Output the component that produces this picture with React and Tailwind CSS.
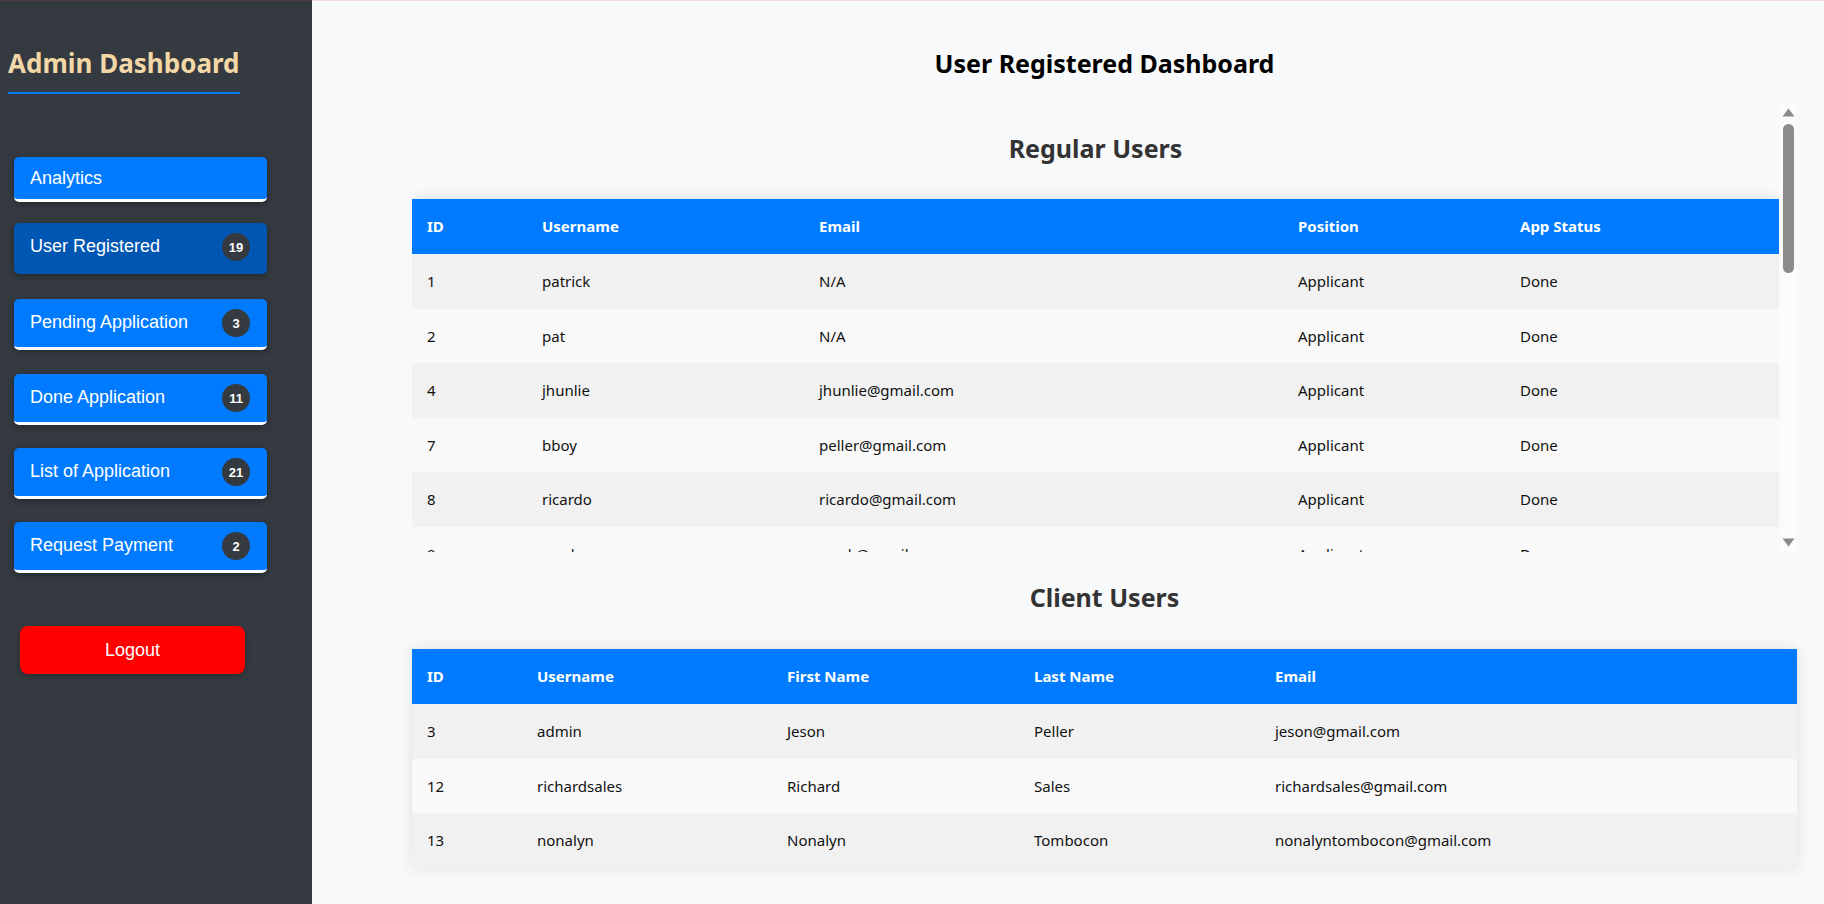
import React from 'react';

const navItems = [
  { label: 'Analytics', gap: 'mt-[63px]' },
  { label: 'User Registered', count: 19, active: true, gap: 'mt-[21px]' },
  { label: 'Pending Application', count: 3, gap: 'mt-[25px]' },
  { label: 'Done Application', count: 11, gap: 'mt-[24px]' },
  { label: 'List of Application', count: 21, gap: 'mt-[23px]' },
  { label: 'Request Payment', count: 2, gap: 'mt-[23px]' },
];

// only the rows that show inside the scroll box
const regularUsers = [
  { id: 1, username: 'patrick', email: 'N/A' },
  { id: 2, username: 'pat', email: 'N/A' },
  { id: 4, username: 'jhunlie', email: 'jhunlie@gmail.com' },
  { id: 7, username: 'bboy', email: 'peller@gmail.com' },
  { id: 8, username: 'ricardo', email: 'ricardo@gmail.com' },
  { id: 9, username: 'mark', email: 'mark@gmail.com' },
];

const clientUsers = [
  { id: 3, username: 'admin', first: 'Jeson', last: 'Peller', email: 'jeson@gmail.com' },
  { id: 12, username: 'richardsales', first: 'Richard', last: 'Sales', email: 'richardsales@gmail.com' },
  { id: 13, username: 'nonalyn', first: 'Nonalyn', last: 'Tombocon', email: 'nonalyntombocon@gmail.com' },
];

function Sidebar() {
  return (
    <aside className="w-[312px] shrink-0 bg-[#343a40] flex flex-col items-start font-['Liberation_Sans',Arial,sans-serif]">
      <h2 className="ml-[8px] mt-[47px] pb-[13px] border-b-2 border-[#007bff] text-[26px] leading-[32px] font-bold text-[#f3d7a6] font-['Noto_Sans',sans-serif]">
        Admin Dashboard
      </h2>
      {navItems.map((item) => (
        <button
          key={item.label}
          className={`${item.gap} ml-[14px] w-[253px] flex items-baseline justify-between pl-[16px] pr-[17px] py-[10px] rounded-[5px] border-b-[3px] text-left text-white text-[18px] shadow-[0_2px_7px_rgba(0,0,0,0.3)] ${
            item.active ? 'bg-[#0056b3] border-[#0056b3]' : 'bg-[#007bff] border-white'
          }`}
        >
          <span className="leading-[22px]">{item.label}</span>
          {item.count != null && (
            <span className="flex items-center justify-center w-[28px] h-[28px] rounded-full bg-[#343a40] text-white text-[13px] leading-[15px] font-bold">
              {item.count}
            </span>
          )}
        </button>
      ))}
      <button className="mt-[53px] ml-[20px] w-[225px] py-[13px] rounded-[8px] bg-[#ff0000] text-white text-[18px] leading-[22px] text-center shadow-[0_2px_6px_rgba(0,0,0,0.25)]">
        Logout
      </button>
    </aside>
  );
}

function HeadCell({ children }) {
  return <th className="px-[15px] text-left font-bold text-white text-[15px]">{children}</th>;
}

function Cell({ children }) {
  return <td className="px-[15px] text-[15px] text-[#111]">{children}</td>;
}

function RegularTable() {
  return (
    <table className="w-full table-fixed border-collapse shadow-[0_0_14px_rgba(0,0,0,0.1)]">
      <colgroup>
        <col className="w-[115px]" />
        <col className="w-[277px]" />
        <col className="w-[479px]" />
        <col className="w-[222px]" />
        <col />
      </colgroup>
      <thead>
        <tr className="h-[55px] bg-[#007bff]">
          <HeadCell>ID</HeadCell>
          <HeadCell>Username</HeadCell>
          <HeadCell>Email</HeadCell>
          <HeadCell>Position</HeadCell>
          <HeadCell>App Status</HeadCell>
        </tr>
      </thead>
      <tbody>
        {regularUsers.map((u, i) => (
          <tr key={u.id} className={i % 2 === 0 ? 'h-[54.5px] bg-[#f1f1f1]' : 'h-[54.5px] bg-[#f9f9f9]'}>
            <Cell>{u.id}</Cell>
            <Cell>{u.username}</Cell>
            <Cell>{u.email}</Cell>
            <Cell>Applicant</Cell>
            <Cell>Done</Cell>
          </tr>
        ))}
      </tbody>
    </table>
  );
}

function ClientTable() {
  return (
    <table className="w-full table-fixed border-collapse shadow-[0_0_14px_rgba(0,0,0,0.1)]">
      <colgroup>
        <col className="w-[110px]" />
        <col className="w-[250px]" />
        <col className="w-[247px]" />
        <col className="w-[241px]" />
        <col />
      </colgroup>
      <thead>
        <tr className="h-[55px] bg-[#007bff]">
          <HeadCell>ID</HeadCell>
          <HeadCell>Username</HeadCell>
          <HeadCell>First Name</HeadCell>
          <HeadCell>Last Name</HeadCell>
          <HeadCell>Email</HeadCell>
        </tr>
      </thead>
      <tbody>
        {clientUsers.map((u, i) => (
          <tr key={u.id} className={i % 2 === 0 ? 'h-[54.6px] bg-[#f1f1f1]' : 'h-[54.6px] bg-[#f9f9f9]'}>
            <Cell>{u.id}</Cell>
            <Cell>{u.username}</Cell>
            <Cell>{u.first}</Cell>
            <Cell>{u.last}</Cell>
            <Cell>{u.email}</Cell>
          </tr>
        ))}
      </tbody>
    </table>
  );
}

function ScrollBar() {
  return (
    <div className="w-[18px] shrink-0 bg-[#fbfbfb] flex flex-col items-center">
      <svg width="13" height="9" viewBox="0 0 13 9" className="mt-[6px]">
        <path d="M6.5 0.5 L12.5 8.5 L0.5 8.5 Z" fill="#8b8b8b" />
      </svg>
      <div className="mt-[7px] w-[11px] h-[149px] rounded-full bg-[#8b8b8b]" />
      <div className="flex-1" />
      <svg width="13" height="9" viewBox="0 0 13 9" className="mb-[5px]">
        <path d="M0.5 0.5 L12.5 0.5 L6.5 8.5 Z" fill="#8b8b8b" />
      </svg>
    </div>
  );
}

export default function App() {
  return (
    <div className="relative flex min-h-screen h-[904px] overflow-hidden">
      <div className="absolute top-0 inset-x-0 h-px bg-[rgba(220,53,69,0.16)] pointer-events-none" />
      <Sidebar />
      <main className="flex-1 flex flex-col bg-[#f8f9fa] pl-[100px] pr-[27px] pt-[48px] font-['Noto_Sans',sans-serif]">
        <h1 className="text-center text-[25px] leading-[30px] font-bold text-black">User Registered Dashboard</h1>
        <div className="mt-[24px] h-[450px] flex">
          <div className="flex-1 overflow-hidden">
            <h2 className="pt-[31px] mb-[36px] text-center text-[25px] leading-[30px] font-bold text-[#333]">Regular Users</h2>
            <RegularTable />
          </div>
          <ScrollBar />
        </div>
        <h2 className="mt-[30px] mb-[37px] text-center text-[25px] leading-[30px] font-bold text-[#333]">Client Users</h2>
        <ClientTable />
      </main>
    </div>
  );
}
